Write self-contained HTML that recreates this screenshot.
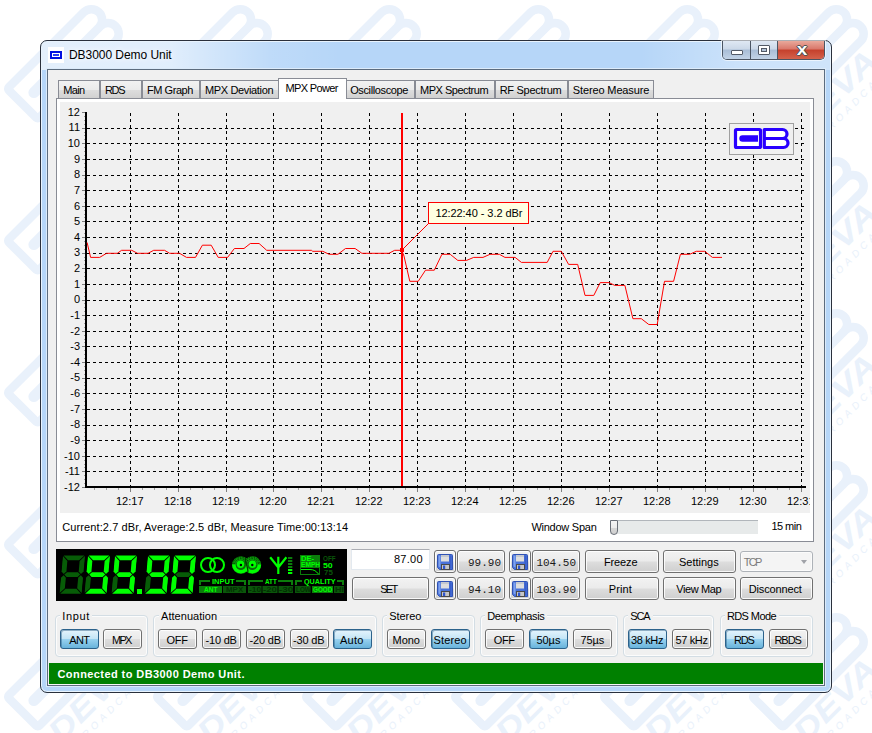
<!DOCTYPE html>
<html lang="en"><head><meta charset="utf-8"><title>DB3000 Demo Unit</title>
<style>
*{box-sizing:border-box;margin:0;padding:0}
html,body{width:872px;height:733px;overflow:hidden;background:#fff}
body{position:relative;font-family:"Liberation Sans", Arial, sans-serif;font-size:11px;color:#000}
.abs{position:absolute}
.t{position:absolute;white-space:nowrap;line-height:13px;height:13px}
#win{position:absolute;left:40px;top:40px;width:792px;height:653px;border:1px solid #2a303c;border-radius:7px;
 background:linear-gradient(90deg,rgba(255,255,255,.62) 0,rgba(255,255,255,.58) 130px,rgba(255,255,255,.12) 230px,rgba(255,255,255,0) 300px,rgba(255,255,255,0) 600px,rgba(255,255,255,.3) 700px,rgba(255,255,255,.35) 100%) top left/100% 29px no-repeat,#b6d6f8;box-shadow:inset 0 0 0 1px #e8f3fd}
#client{position:absolute;left:47px;top:69px;width:778px;height:617px;border:1px solid #5c6c7e;background:#f0f0f0;box-shadow:0 0 0 1px #dcebfa,inset 0 -1px 0 0 #f6f6f6}
.tab{position:absolute;top:80px;height:19px;border:1px solid #898c95;border-bottom:none;
 background:linear-gradient(180deg,#f2f2f2 0,#ebebeb 48%,#dddddd 52%,#cfcfcf 100%)}
.tab.sel{top:78px;height:21px;background:#fff;z-index:3}
.btn{position:absolute;border:1px solid #707070;border-radius:3px;
 background:linear-gradient(180deg,#f2f2f2 0,#ebebeb 48%,#dddddd 52%,#cfcfcf 100%);box-shadow:inset 0 0 0 1px rgba(255,255,255,.85)}
.btn.on{border-color:#2c628b;background:linear-gradient(180deg,#e5f4fc 0,#c4e5f6 48%,#98d1ef 52%,#68b3db 100%);box-shadow:inset 1px 1px 0 0 rgba(40,90,130,.45)}
.grp{position:absolute;border:1px solid #d3dde4;border-radius:4px;box-shadow:inset 0 0 0 1px #fcfcfc}
.gl{position:absolute;background:#f0f0f0;white-space:nowrap;line-height:13px;height:13px;padding:0 2px}
.lt{font-weight:bold;white-space:nowrap}
</style></head>
<body>
<svg class="abs" style="left:0;top:0" width="872" height="733" viewBox="0 0 872 733"><g fill="#e9f1fb" stroke="none" font-family="'Liberation Sans', Arial, sans-serif"><g transform="translate(-84.0 61.5) rotate(-45)"><g fill="none" stroke="#e9f1fb" stroke-width="8.5" stroke-linejoin="round"><rect x="-60" y="-21.5" width="54" height="43" rx="2"/><path d="M5 -21.5H48a10.5 10.5 0 0 1 0 21.5H5M5 0H50a10.7 10.7 0 0 1 0 21.5H5"/><path d="M-44 0H-20" stroke-width="11" stroke-linecap="round"/></g><text x="-4" y="50" font-size="31" font-weight="bold" font-style="italic" text-anchor="middle" textLength="104" lengthAdjust="spacingAndGlyphs">DEVA</text><text x="3" y="64" font-size="10" font-style="italic" text-anchor="middle" textLength="96" lengthAdjust="spacing">BROADCAST</text></g><g transform="translate(65.0 61.5) rotate(-45)"><g fill="none" stroke="#e9f1fb" stroke-width="8.5" stroke-linejoin="round"><rect x="-60" y="-21.5" width="54" height="43" rx="2"/><path d="M5 -21.5H48a10.5 10.5 0 0 1 0 21.5H5M5 0H50a10.7 10.7 0 0 1 0 21.5H5"/><path d="M-44 0H-20" stroke-width="11" stroke-linecap="round"/></g><text x="-4" y="50" font-size="31" font-weight="bold" font-style="italic" text-anchor="middle" textLength="104" lengthAdjust="spacingAndGlyphs">DEVA</text><text x="3" y="64" font-size="10" font-style="italic" text-anchor="middle" textLength="96" lengthAdjust="spacing">BROADCAST</text></g><g transform="translate(214.0 61.5) rotate(-45)"><g fill="none" stroke="#e9f1fb" stroke-width="8.5" stroke-linejoin="round"><rect x="-60" y="-21.5" width="54" height="43" rx="2"/><path d="M5 -21.5H48a10.5 10.5 0 0 1 0 21.5H5M5 0H50a10.7 10.7 0 0 1 0 21.5H5"/><path d="M-44 0H-20" stroke-width="11" stroke-linecap="round"/></g><text x="-4" y="50" font-size="31" font-weight="bold" font-style="italic" text-anchor="middle" textLength="104" lengthAdjust="spacingAndGlyphs">DEVA</text><text x="3" y="64" font-size="10" font-style="italic" text-anchor="middle" textLength="96" lengthAdjust="spacing">BROADCAST</text></g><g transform="translate(363.0 61.5) rotate(-45)"><g fill="none" stroke="#e9f1fb" stroke-width="8.5" stroke-linejoin="round"><rect x="-60" y="-21.5" width="54" height="43" rx="2"/><path d="M5 -21.5H48a10.5 10.5 0 0 1 0 21.5H5M5 0H50a10.7 10.7 0 0 1 0 21.5H5"/><path d="M-44 0H-20" stroke-width="11" stroke-linecap="round"/></g><text x="-4" y="50" font-size="31" font-weight="bold" font-style="italic" text-anchor="middle" textLength="104" lengthAdjust="spacingAndGlyphs">DEVA</text><text x="3" y="64" font-size="10" font-style="italic" text-anchor="middle" textLength="96" lengthAdjust="spacing">BROADCAST</text></g><g transform="translate(512.0 61.5) rotate(-45)"><g fill="none" stroke="#e9f1fb" stroke-width="8.5" stroke-linejoin="round"><rect x="-60" y="-21.5" width="54" height="43" rx="2"/><path d="M5 -21.5H48a10.5 10.5 0 0 1 0 21.5H5M5 0H50a10.7 10.7 0 0 1 0 21.5H5"/><path d="M-44 0H-20" stroke-width="11" stroke-linecap="round"/></g><text x="-4" y="50" font-size="31" font-weight="bold" font-style="italic" text-anchor="middle" textLength="104" lengthAdjust="spacingAndGlyphs">DEVA</text><text x="3" y="64" font-size="10" font-style="italic" text-anchor="middle" textLength="96" lengthAdjust="spacing">BROADCAST</text></g><g transform="translate(661.0 61.5) rotate(-45)"><g fill="none" stroke="#e9f1fb" stroke-width="8.5" stroke-linejoin="round"><rect x="-60" y="-21.5" width="54" height="43" rx="2"/><path d="M5 -21.5H48a10.5 10.5 0 0 1 0 21.5H5M5 0H50a10.7 10.7 0 0 1 0 21.5H5"/><path d="M-44 0H-20" stroke-width="11" stroke-linecap="round"/></g><text x="-4" y="50" font-size="31" font-weight="bold" font-style="italic" text-anchor="middle" textLength="104" lengthAdjust="spacingAndGlyphs">DEVA</text><text x="3" y="64" font-size="10" font-style="italic" text-anchor="middle" textLength="96" lengthAdjust="spacing">BROADCAST</text></g><g transform="translate(810.0 61.5) rotate(-45)"><g fill="none" stroke="#e9f1fb" stroke-width="8.5" stroke-linejoin="round"><rect x="-60" y="-21.5" width="54" height="43" rx="2"/><path d="M5 -21.5H48a10.5 10.5 0 0 1 0 21.5H5M5 0H50a10.7 10.7 0 0 1 0 21.5H5"/><path d="M-44 0H-20" stroke-width="11" stroke-linecap="round"/></g><text x="-4" y="50" font-size="31" font-weight="bold" font-style="italic" text-anchor="middle" textLength="104" lengthAdjust="spacingAndGlyphs">DEVA</text><text x="3" y="64" font-size="10" font-style="italic" text-anchor="middle" textLength="96" lengthAdjust="spacing">BROADCAST</text></g><g transform="translate(-84.0 213.5) rotate(-45)"><g fill="none" stroke="#e9f1fb" stroke-width="8.5" stroke-linejoin="round"><rect x="-60" y="-21.5" width="54" height="43" rx="2"/><path d="M5 -21.5H48a10.5 10.5 0 0 1 0 21.5H5M5 0H50a10.7 10.7 0 0 1 0 21.5H5"/><path d="M-44 0H-20" stroke-width="11" stroke-linecap="round"/></g><text x="-4" y="50" font-size="31" font-weight="bold" font-style="italic" text-anchor="middle" textLength="104" lengthAdjust="spacingAndGlyphs">DEVA</text><text x="3" y="64" font-size="10" font-style="italic" text-anchor="middle" textLength="96" lengthAdjust="spacing">BROADCAST</text></g><g transform="translate(65.0 213.5) rotate(-45)"><g fill="none" stroke="#e9f1fb" stroke-width="8.5" stroke-linejoin="round"><rect x="-60" y="-21.5" width="54" height="43" rx="2"/><path d="M5 -21.5H48a10.5 10.5 0 0 1 0 21.5H5M5 0H50a10.7 10.7 0 0 1 0 21.5H5"/><path d="M-44 0H-20" stroke-width="11" stroke-linecap="round"/></g><text x="-4" y="50" font-size="31" font-weight="bold" font-style="italic" text-anchor="middle" textLength="104" lengthAdjust="spacingAndGlyphs">DEVA</text><text x="3" y="64" font-size="10" font-style="italic" text-anchor="middle" textLength="96" lengthAdjust="spacing">BROADCAST</text></g><g transform="translate(810.0 213.5) rotate(-45)"><g fill="none" stroke="#e9f1fb" stroke-width="8.5" stroke-linejoin="round"><rect x="-60" y="-21.5" width="54" height="43" rx="2"/><path d="M5 -21.5H48a10.5 10.5 0 0 1 0 21.5H5M5 0H50a10.7 10.7 0 0 1 0 21.5H5"/><path d="M-44 0H-20" stroke-width="11" stroke-linecap="round"/></g><text x="-4" y="50" font-size="31" font-weight="bold" font-style="italic" text-anchor="middle" textLength="104" lengthAdjust="spacingAndGlyphs">DEVA</text><text x="3" y="64" font-size="10" font-style="italic" text-anchor="middle" textLength="96" lengthAdjust="spacing">BROADCAST</text></g><g transform="translate(-84.0 365.5) rotate(-45)"><g fill="none" stroke="#e9f1fb" stroke-width="8.5" stroke-linejoin="round"><rect x="-60" y="-21.5" width="54" height="43" rx="2"/><path d="M5 -21.5H48a10.5 10.5 0 0 1 0 21.5H5M5 0H50a10.7 10.7 0 0 1 0 21.5H5"/><path d="M-44 0H-20" stroke-width="11" stroke-linecap="round"/></g><text x="-4" y="50" font-size="31" font-weight="bold" font-style="italic" text-anchor="middle" textLength="104" lengthAdjust="spacingAndGlyphs">DEVA</text><text x="3" y="64" font-size="10" font-style="italic" text-anchor="middle" textLength="96" lengthAdjust="spacing">BROADCAST</text></g><g transform="translate(65.0 365.5) rotate(-45)"><g fill="none" stroke="#e9f1fb" stroke-width="8.5" stroke-linejoin="round"><rect x="-60" y="-21.5" width="54" height="43" rx="2"/><path d="M5 -21.5H48a10.5 10.5 0 0 1 0 21.5H5M5 0H50a10.7 10.7 0 0 1 0 21.5H5"/><path d="M-44 0H-20" stroke-width="11" stroke-linecap="round"/></g><text x="-4" y="50" font-size="31" font-weight="bold" font-style="italic" text-anchor="middle" textLength="104" lengthAdjust="spacingAndGlyphs">DEVA</text><text x="3" y="64" font-size="10" font-style="italic" text-anchor="middle" textLength="96" lengthAdjust="spacing">BROADCAST</text></g><g transform="translate(810.0 365.5) rotate(-45)"><g fill="none" stroke="#e9f1fb" stroke-width="8.5" stroke-linejoin="round"><rect x="-60" y="-21.5" width="54" height="43" rx="2"/><path d="M5 -21.5H48a10.5 10.5 0 0 1 0 21.5H5M5 0H50a10.7 10.7 0 0 1 0 21.5H5"/><path d="M-44 0H-20" stroke-width="11" stroke-linecap="round"/></g><text x="-4" y="50" font-size="31" font-weight="bold" font-style="italic" text-anchor="middle" textLength="104" lengthAdjust="spacingAndGlyphs">DEVA</text><text x="3" y="64" font-size="10" font-style="italic" text-anchor="middle" textLength="96" lengthAdjust="spacing">BROADCAST</text></g><g transform="translate(-84.0 517.5) rotate(-45)"><g fill="none" stroke="#e9f1fb" stroke-width="8.5" stroke-linejoin="round"><rect x="-60" y="-21.5" width="54" height="43" rx="2"/><path d="M5 -21.5H48a10.5 10.5 0 0 1 0 21.5H5M5 0H50a10.7 10.7 0 0 1 0 21.5H5"/><path d="M-44 0H-20" stroke-width="11" stroke-linecap="round"/></g><text x="-4" y="50" font-size="31" font-weight="bold" font-style="italic" text-anchor="middle" textLength="104" lengthAdjust="spacingAndGlyphs">DEVA</text><text x="3" y="64" font-size="10" font-style="italic" text-anchor="middle" textLength="96" lengthAdjust="spacing">BROADCAST</text></g><g transform="translate(65.0 517.5) rotate(-45)"><g fill="none" stroke="#e9f1fb" stroke-width="8.5" stroke-linejoin="round"><rect x="-60" y="-21.5" width="54" height="43" rx="2"/><path d="M5 -21.5H48a10.5 10.5 0 0 1 0 21.5H5M5 0H50a10.7 10.7 0 0 1 0 21.5H5"/><path d="M-44 0H-20" stroke-width="11" stroke-linecap="round"/></g><text x="-4" y="50" font-size="31" font-weight="bold" font-style="italic" text-anchor="middle" textLength="104" lengthAdjust="spacingAndGlyphs">DEVA</text><text x="3" y="64" font-size="10" font-style="italic" text-anchor="middle" textLength="96" lengthAdjust="spacing">BROADCAST</text></g><g transform="translate(810.0 517.5) rotate(-45)"><g fill="none" stroke="#e9f1fb" stroke-width="8.5" stroke-linejoin="round"><rect x="-60" y="-21.5" width="54" height="43" rx="2"/><path d="M5 -21.5H48a10.5 10.5 0 0 1 0 21.5H5M5 0H50a10.7 10.7 0 0 1 0 21.5H5"/><path d="M-44 0H-20" stroke-width="11" stroke-linecap="round"/></g><text x="-4" y="50" font-size="31" font-weight="bold" font-style="italic" text-anchor="middle" textLength="104" lengthAdjust="spacingAndGlyphs">DEVA</text><text x="3" y="64" font-size="10" font-style="italic" text-anchor="middle" textLength="96" lengthAdjust="spacing">BROADCAST</text></g><g transform="translate(-84.0 669.5) rotate(-45)"><g fill="none" stroke="#e9f1fb" stroke-width="8.5" stroke-linejoin="round"><rect x="-60" y="-21.5" width="54" height="43" rx="2"/><path d="M5 -21.5H48a10.5 10.5 0 0 1 0 21.5H5M5 0H50a10.7 10.7 0 0 1 0 21.5H5"/><path d="M-44 0H-20" stroke-width="11" stroke-linecap="round"/></g><text x="-4" y="50" font-size="31" font-weight="bold" font-style="italic" text-anchor="middle" textLength="104" lengthAdjust="spacingAndGlyphs">DEVA</text><text x="3" y="64" font-size="10" font-style="italic" text-anchor="middle" textLength="96" lengthAdjust="spacing">BROADCAST</text></g><g transform="translate(65.0 669.5) rotate(-45)"><g fill="none" stroke="#e9f1fb" stroke-width="8.5" stroke-linejoin="round"><rect x="-60" y="-21.5" width="54" height="43" rx="2"/><path d="M5 -21.5H48a10.5 10.5 0 0 1 0 21.5H5M5 0H50a10.7 10.7 0 0 1 0 21.5H5"/><path d="M-44 0H-20" stroke-width="11" stroke-linecap="round"/></g><text x="-4" y="50" font-size="31" font-weight="bold" font-style="italic" text-anchor="middle" textLength="104" lengthAdjust="spacingAndGlyphs">DEVA</text><text x="3" y="64" font-size="10" font-style="italic" text-anchor="middle" textLength="96" lengthAdjust="spacing">BROADCAST</text></g><g transform="translate(214.0 669.5) rotate(-45)"><g fill="none" stroke="#e9f1fb" stroke-width="8.5" stroke-linejoin="round"><rect x="-60" y="-21.5" width="54" height="43" rx="2"/><path d="M5 -21.5H48a10.5 10.5 0 0 1 0 21.5H5M5 0H50a10.7 10.7 0 0 1 0 21.5H5"/><path d="M-44 0H-20" stroke-width="11" stroke-linecap="round"/></g><text x="-4" y="50" font-size="31" font-weight="bold" font-style="italic" text-anchor="middle" textLength="104" lengthAdjust="spacingAndGlyphs">DEVA</text><text x="3" y="64" font-size="10" font-style="italic" text-anchor="middle" textLength="96" lengthAdjust="spacing">BROADCAST</text></g><g transform="translate(363.0 669.5) rotate(-45)"><g fill="none" stroke="#e9f1fb" stroke-width="8.5" stroke-linejoin="round"><rect x="-60" y="-21.5" width="54" height="43" rx="2"/><path d="M5 -21.5H48a10.5 10.5 0 0 1 0 21.5H5M5 0H50a10.7 10.7 0 0 1 0 21.5H5"/><path d="M-44 0H-20" stroke-width="11" stroke-linecap="round"/></g><text x="-4" y="50" font-size="31" font-weight="bold" font-style="italic" text-anchor="middle" textLength="104" lengthAdjust="spacingAndGlyphs">DEVA</text><text x="3" y="64" font-size="10" font-style="italic" text-anchor="middle" textLength="96" lengthAdjust="spacing">BROADCAST</text></g><g transform="translate(512.0 669.5) rotate(-45)"><g fill="none" stroke="#e9f1fb" stroke-width="8.5" stroke-linejoin="round"><rect x="-60" y="-21.5" width="54" height="43" rx="2"/><path d="M5 -21.5H48a10.5 10.5 0 0 1 0 21.5H5M5 0H50a10.7 10.7 0 0 1 0 21.5H5"/><path d="M-44 0H-20" stroke-width="11" stroke-linecap="round"/></g><text x="-4" y="50" font-size="31" font-weight="bold" font-style="italic" text-anchor="middle" textLength="104" lengthAdjust="spacingAndGlyphs">DEVA</text><text x="3" y="64" font-size="10" font-style="italic" text-anchor="middle" textLength="96" lengthAdjust="spacing">BROADCAST</text></g><g transform="translate(661.0 669.5) rotate(-45)"><g fill="none" stroke="#e9f1fb" stroke-width="8.5" stroke-linejoin="round"><rect x="-60" y="-21.5" width="54" height="43" rx="2"/><path d="M5 -21.5H48a10.5 10.5 0 0 1 0 21.5H5M5 0H50a10.7 10.7 0 0 1 0 21.5H5"/><path d="M-44 0H-20" stroke-width="11" stroke-linecap="round"/></g><text x="-4" y="50" font-size="31" font-weight="bold" font-style="italic" text-anchor="middle" textLength="104" lengthAdjust="spacingAndGlyphs">DEVA</text><text x="3" y="64" font-size="10" font-style="italic" text-anchor="middle" textLength="96" lengthAdjust="spacing">BROADCAST</text></g><g transform="translate(810.0 669.5) rotate(-45)"><g fill="none" stroke="#e9f1fb" stroke-width="8.5" stroke-linejoin="round"><rect x="-60" y="-21.5" width="54" height="43" rx="2"/><path d="M5 -21.5H48a10.5 10.5 0 0 1 0 21.5H5M5 0H50a10.7 10.7 0 0 1 0 21.5H5"/><path d="M-44 0H-20" stroke-width="11" stroke-linecap="round"/></g><text x="-4" y="50" font-size="31" font-weight="bold" font-style="italic" text-anchor="middle" textLength="104" lengthAdjust="spacingAndGlyphs">DEVA</text><text x="3" y="64" font-size="10" font-style="italic" text-anchor="middle" textLength="96" lengthAdjust="spacing">BROADCAST</text></g></g></svg>
<div id="win"></div>
<div class="abs" style="left:48px;top:47px;width:16px;height:16px;background:#fff"></div><div class="abs" style="left:50px;top:51px;width:12px;height:8px;border:2px solid #0010e0;background:#fff"></div><div class="abs" style="left:53px;top:54px;width:6px;height:2px;background:#2a3cf0"></div>
<div class="t" id="title" style="left:69px;top:47px;font-size:12px;line-height:16px;height:16px;letter-spacing:-0.05px;text-shadow:0 0 6px #fff,0 0 10px #fff">DB3000 Demo Unit</div>
<div class="abs" style="left:722px;top:41px;width:103px;height:19px;border:1px solid #4b5563;border-top:none;border-radius:0 0 5px 5px;overflow:hidden;box-shadow:0 0 0 1px rgba(255,255,255,.6)">
<div class="abs" style="left:0;top:0;width:28px;height:18px;background:linear-gradient(180deg,#dfe8f3 0,#cbd8e8 45%,#a9bdd6 50%,#c2d3e6 100%);border-right:1px solid #4b5563"></div>
<div class="abs" style="left:28px;top:0;width:27px;height:18px;background:linear-gradient(180deg,#dfe8f3 0,#cbd8e8 45%,#a9bdd6 50%,#c2d3e6 100%);border-right:1px solid #4b5563"></div>
<div class="abs" style="left:55px;top:0;width:47px;height:18px;background:linear-gradient(180deg,#e9a99b 0,#d9776a 45%,#c5402c 50%,#d4624b 100%)"></div>
<div class="abs" style="left:8px;top:9px;width:12px;height:5px;background:#fff;border:1px solid #535a66;border-radius:1px"></div>
<div class="abs" style="left:35px;top:4px;width:12px;height:10px;background:#fff;border:1px solid #535a66;border-radius:1px"></div>
<div class="abs" style="left:38px;top:7px;width:6px;height:4px;background:#b4c4d8;border:1px solid #535a66"></div>
<div class="t" style="left:69.5px;top:0.6px;width:18px;text-align:center;font-size:17px;line-height:16px;height:16px;transform:scaleX(1.12);font-weight:bold;color:#fff;text-shadow:0 0 1px #3b3b3b,1px 0 0 #555,-1px 0 0 #555,0 1px 0 #555,0 -1px 0 #555">x</div>
</div>
<div id="client"></div>
<div class="tab" style="left:58px;width:42px"></div><div class="t" style="letter-spacing:-0.71px;left:63.3px;top:84px;z-index:4">Main</div>
<div class="tab" style="left:100px;width:42px"></div><div class="t" style="letter-spacing:-1.27px;left:104.9px;top:84px;z-index:4">RDS</div>
<div class="tab" style="left:142px;width:58px"></div><div class="t" style="letter-spacing:-0.45px;left:147.0px;top:84px;z-index:4">FM Graph</div>
<div class="tab" style="left:200px;width:79px"></div><div class="t" style="letter-spacing:-0.35px;left:205.0px;top:84px;z-index:4">MPX Deviation</div>
<div class="tab" style="left:346px;width:69px"></div><div class="t" style="letter-spacing:-0.38px;left:350.2px;top:84px;z-index:4">Oscilloscope</div>
<div class="tab" style="left:415px;width:80px"></div><div class="t" style="letter-spacing:-0.50px;left:420.09999999999997px;top:84px;z-index:4">MPX Spectrum</div>
<div class="tab" style="left:495px;width:73px"></div><div class="t" style="letter-spacing:-0.28px;left:499.7px;top:84px;z-index:4">RF Spectrum</div>
<div class="tab" style="left:568px;width:86px"></div><div class="t" style="letter-spacing:-0.13px;left:572.8px;top:84px;z-index:4">Stereo Measure</div>
<div class="abs" style="left:56px;top:98px;width:758px;height:444px;border:1px solid #898c95;background:#fff;z-index:2"></div>
<div class="tab sel" style="left:278px;width:69px"></div><div class="abs" style="left:279px;top:98px;width:67px;height:1px;background:#fff;z-index:4"></div><div class="t" style="letter-spacing:-0.63px;left:285.4px;top:82px;z-index:4">MPX Power</div>
<svg class="abs" style="left:60px;top:102px;z-index:3" width="750" height="411" viewBox="60 102 750 411" shape-rendering="crispEdges"><rect x="60" y="102" width="750" height="411" fill="#f0f0f0"/><path d="M87 471.5H804M87 456.5H804M87 440.5H804M87 425.5H804M87 409.5H804M87 393.5H804M87 378.5H804M87 362.5H804M87 346.5H804M87 331.5H804M87 315.5H804M87 300.5H804M87 284.5H804M87 268.5H804M87 253.5H804M87 237.5H804M87 221.5H804M87 206.5H804M87 190.5H804M87 175.5H804M87 159.5H804M87 143.5H804M87 128.5H804" stroke="#000" stroke-width="1" stroke-dasharray="3 3" fill="none"/><path d="M130.5 113V486M178.5 113V486M226.5 113V486M273.5 113V486M321.5 113V486M369.5 113V486M417.5 113V486M465.5 113V486M513.5 113V486M561.5 113V486M609.5 113V486M657.5 113V486M705.5 113V486M753.5 113V486M801.5 113V486" stroke="#000" stroke-width="1" stroke-dasharray="3 3" fill="none"/><path d="M82 487.5H85M82 471.5H85M82 456.5H85M82 440.5H85M82 425.5H85M82 409.5H85M82 393.5H85M82 378.5H85M82 362.5H85M82 346.5H85M82 331.5H85M82 315.5H85M82 300.5H85M82 284.5H85M82 268.5H85M82 253.5H85M82 237.5H85M82 221.5H85M82 206.5H85M82 190.5H85M82 175.5H85M82 159.5H85M82 143.5H85M82 128.5H85M82 112.5H85" stroke="#808080" stroke-width="1" fill="none"/><path d="M84 116.5H85M84 120.5H85M84 124.5H85M84 132.5H85M84 135.5H85M84 139.5H85M84 147.5H85M84 151.5H85M84 155.5H85M84 163.5H85M84 167.5H85M84 171.5H85M84 178.5H85M84 182.5H85M84 186.5H85M84 194.5H85M84 198.5H85M84 202.5H85M84 210.5H85M84 214.5H85M84 217.5H85M84 225.5H85M84 229.5H85M84 233.5H85M84 241.5H85M84 245.5H85M84 249.5H85M84 257.5H85M84 260.5H85M84 264.5H85M84 272.5H85M84 276.5H85M84 280.5H85M84 288.5H85M84 292.5H85M84 296.5H85M84 303.5H85M84 307.5H85M84 311.5H85M84 319.5H85M84 323.5H85M84 327.5H85M84 335.5H85M84 339.5H85M84 342.5H85M84 350.5H85M84 354.5H85M84 358.5H85M84 366.5H85M84 370.5H85M84 374.5H85M84 382.5H85M84 385.5H85M84 389.5H85M84 397.5H85M84 401.5H85M84 405.5H85M84 413.5H85M84 417.5H85M84 421.5H85M84 428.5H85M84 432.5H85M84 436.5H85M84 444.5H85M84 448.5H85M84 452.5H85M84 460.5H85M84 464.5H85M84 467.5H85M84 475.5H85M84 479.5H85M84 483.5H85" stroke="#a0a0a0" stroke-width="1" fill="none"/><path d="M130.5 488V492M178.5 488V492M226.5 488V492M273.5 488V492M321.5 488V492M369.5 488V492M417.5 488V492M465.5 488V492M513.5 488V492M561.5 488V492M609.5 488V492M657.5 488V492M705.5 488V492M753.5 488V492M801.5 488V492" stroke="#808080" stroke-width="1" fill="none"/><path d="M94.5 488V490M106.5 488V490M118.5 488V490M142.5 488V490M154.5 488V490M166.5 488V490M190.5 488V490M202.5 488V490M214.5 488V490M238.5 488V490M250.5 488V490M262.5 488V490M286.5 488V490M298.5 488V490M310.5 488V490M333.5 488V490M345.5 488V490M357.5 488V490M381.5 488V490M393.5 488V490M405.5 488V490M429.5 488V490M441.5 488V490M453.5 488V490M477.5 488V490M489.5 488V490M501.5 488V490M525.5 488V490M537.5 488V490M549.5 488V490M573.5 488V490M585.5 488V490M597.5 488V490M621.5 488V490M633.5 488V490M645.5 488V490M669.5 488V490M681.5 488V490M693.5 488V490M717.5 488V490M729.5 488V490M741.5 488V490M765.5 488V490M777.5 488V490M789.5 488V490" stroke="#a0a0a0" stroke-width="1" fill="none"/><rect x="85" y="112" width="2" height="376" fill="#000"/><rect x="85" y="486" width="721" height="2" fill="#000"/><path d="M87.1 242.5 L90.6 257.4 L99.7 257.4 L106.5 253.3 L117.3 253.3 L121.6 250.3 L131.7 250.3 L137.5 253.3 L148.1 253.3 L153.7 250.3 L164.5 250.3 L169.6 253.3 L179.6 253.3 L186.5 257.4 L195.5 257.4 L202.4 245.2 L211.2 245.2 L218.2 257.4 L227.6 257.4 L234.4 248.5 L244.0 248.5 L250.3 243.5 L259.1 243.5 L266.7 250.3 L311.4 250.3 L312.7 251.3 L322.8 251.3 L329.1 254.3 L337.9 254.3 L345.5 248.5 L355.1 248.5 L361.9 253.3 L388.9 253.3 L394.7 250.3 L401.8 250.3 L404.0 256.1 L409.8 281.3 L418.2 281.3 L425.5 270.2 L434.3 270.2 L441.9 254.3 L450.2 254.3 L457.8 260.4 L466.6 260.4 L473.7 257.4 L483.0 257.4 L490.0 254.3 L499.4 254.3 L504.9 257.4 L515.1 257.4 L521.4 262.4 L547.2 262.4 L553.0 251.3 L561.3 251.3 L568.6 264.4 L577.7 264.4 L585.0 295.4 L593.8 295.4 L600.2 282.6 L609.0 282.6 L614.8 285.4 L624.9 285.4 L632.9 318.7 L641.3 318.7 L648.8 324.5 L657.2 324.5 L664.5 281.3 L673.6 281.3 L680.4 254.3 L689.7 254.3 L696.3 251.3 L704.8 251.3 L712.4 257.4 L722.0 257.4" stroke="#ff0000" stroke-width="1" fill="none" shape-rendering="auto"/><rect x="401" y="113" width="2" height="373" fill="#ff0000"/><path d="M402 250L429 223" stroke="#ff0000" stroke-width="1" fill="none" shape-rendering="auto"/><rect x="400" y="248" width="4" height="4" fill="#ff0000"/><rect x="428.5" y="202.5" width="100" height="21" fill="#ffffe1" stroke="#ff0000" stroke-width="1"/><rect x="729.5" y="123.5" width="64" height="31" fill="#f0f0f0" stroke="#a0a0a0" stroke-width="1"/><g shape-rendering="auto" fill="#fff" stroke="#2800ff" stroke-width="3.2" stroke-linejoin="round"><rect x="735.5" y="129.5" width="25" height="18" rx="1"/><path d="M764.3 129.5H782.5a4 4 0 0 1 0 9H764.3ZM764.3 138.5H783.5a4.3 4.3 0 0 1 0 9H764.3Z" /><path d="M742.5 135.3H758V141.7H742.5a3.2 3.2 0 0 1 0 -6.4Z" fill="#2800ff" stroke="none"/></g></svg>
<div class="t" style="left:50px;width:30px;text-align:right;top:480.8px;z-index:4">-12</div><div class="t" style="left:50px;width:30px;text-align:right;top:465.2px;z-index:4">-11</div><div class="t" style="left:50px;width:30px;text-align:right;top:449.6px;z-index:4">-10</div><div class="t" style="left:50px;width:30px;text-align:right;top:433.9px;z-index:4">-9</div><div class="t" style="left:50px;width:30px;text-align:right;top:418.3px;z-index:4">-8</div><div class="t" style="left:50px;width:30px;text-align:right;top:402.7px;z-index:4">-7</div><div class="t" style="left:50px;width:30px;text-align:right;top:387.1px;z-index:4">-6</div><div class="t" style="left:50px;width:30px;text-align:right;top:371.4px;z-index:4">-5</div><div class="t" style="left:50px;width:30px;text-align:right;top:355.8px;z-index:4">-4</div><div class="t" style="left:50px;width:30px;text-align:right;top:340.2px;z-index:4">-3</div><div class="t" style="left:50px;width:30px;text-align:right;top:324.6px;z-index:4">-2</div><div class="t" style="left:50px;width:30px;text-align:right;top:308.9px;z-index:4">-1</div><div class="t" style="left:50px;width:30px;text-align:right;top:293.3px;z-index:4">0</div><div class="t" style="left:50px;width:30px;text-align:right;top:277.7px;z-index:4">1</div><div class="t" style="left:50px;width:30px;text-align:right;top:262.1px;z-index:4">2</div><div class="t" style="left:50px;width:30px;text-align:right;top:246.4px;z-index:4">3</div><div class="t" style="left:50px;width:30px;text-align:right;top:230.8px;z-index:4">4</div><div class="t" style="left:50px;width:30px;text-align:right;top:215.2px;z-index:4">5</div><div class="t" style="left:50px;width:30px;text-align:right;top:199.6px;z-index:4">6</div><div class="t" style="left:50px;width:30px;text-align:right;top:183.9px;z-index:4">7</div><div class="t" style="left:50px;width:30px;text-align:right;top:168.3px;z-index:4">8</div><div class="t" style="left:50px;width:30px;text-align:right;top:152.7px;z-index:4">9</div><div class="t" style="left:50px;width:30px;text-align:right;top:137.1px;z-index:4">10</div><div class="t" style="left:50px;width:30px;text-align:right;top:121.4px;z-index:4">11</div><div class="t" style="left:50px;width:30px;text-align:right;top:105.8px;z-index:4">12</div>
<div class="abs" style="left:60px;top:495px;width:750px;height:14px;overflow:hidden;z-index:4"><div class="t ax" style="left:56px;top:0px">12:17</div><div class="t ax" style="left:104px;top:0px">12:18</div><div class="t ax" style="left:152px;top:0px">12:19</div><div class="t ax" style="left:199px;top:0px">12:20</div><div class="t ax" style="left:247px;top:0px">12:21</div><div class="t ax" style="left:295px;top:0px">12:22</div><div class="t ax" style="left:343px;top:0px">12:23</div><div class="t ax" style="left:391px;top:0px">12:24</div><div class="t ax" style="left:439px;top:0px">12:25</div><div class="t ax" style="left:487px;top:0px">12:26</div><div class="t ax" style="left:535px;top:0px">12:27</div><div class="t ax" style="left:583px;top:0px">12:28</div><div class="t ax" style="left:631px;top:0px">12:29</div><div class="t ax" style="left:679px;top:0px">12:30</div><div class="t ax" style="left:727px;top:0px">12:31</div></div>
<div class="abs" style="left:810px;top:102px;width:3px;height:439px;background:#fff;z-index:5"></div><div class="t" style="letter-spacing:-0.06px;left:435.4px;top:207px;z-index:4">12:22:40 - 3.2 dBr</div>
<div class="t" style="letter-spacing:0.10px;left:62.3px;top:521px;z-index:4">Current:2.7 dBr, Average:2.5 dBr, Measure Time:00:13:14</div>
<div class="t" style="letter-spacing:-0.25px;left:531.4px;top:521px;z-index:4">Window Span</div><div class="t" style="letter-spacing:-0.53px;left:771.4px;top:520px;z-index:4">15 min</div>
<div class="abs" style="left:610px;top:520px;width:148px;height:14px;background:#e7eaea;border-top:1px solid #b1b6bb;z-index:4"></div><div class="abs" style="left:610px;top:520px;width:8px;height:15px;border:1px solid #6a6f78;border-radius:1px 1px 4px 4px;background:linear-gradient(180deg,#f4f4f4 0,#ececec 50%,#d6d6d6 55%,#d0d0d0 100%);z-index:5"></div>
<div id="lcd" class="abs" style="left:56px;top:549px;width:291px;height:52px;background:#000;overflow:hidden">
<div class="abs" style="left:2.6px;top:6px;width:23px;height:39.2px;transform:skewX(-5.2deg);transform-origin:0 100%"><div class="abs" style="left:0;top:0;width:100%;height:100%;background:#075c07;clip-path:polygon(1.09px 0.45px,21.91px 0.45px,17.01px 5.35px,5.99px 5.35px)"></div><div class="abs" style="left:0;top:0;width:100%;height:100%;background:#075c07;clip-path:polygon(5.99px 33.85px,17.01px 33.85px,21.91px 38.75px,1.09px 38.75px)"></div><div class="abs" style="left:0;top:0;width:100%;height:100%;background:#075c07;clip-path:polygon(0.45px 1.09px,5.35px 5.99px,5.35px 16.51px,2.90px 18.96px,0.45px 16.51px)"></div><div class="abs" style="left:0;top:0;width:100%;height:100%;background:#075c07;clip-path:polygon(0.45px 22.69px,2.90px 20.24px,5.35px 22.69px,5.35px 33.21px,0.45px 38.11px)"></div><div class="abs" style="left:0;top:0;width:100%;height:100%;background:#075c07;clip-path:polygon(22.55px 1.09px,22.55px 16.51px,20.10px 18.96px,17.65px 16.51px,17.65px 5.99px)"></div><div class="abs" style="left:0;top:0;width:100%;height:100%;background:#075c07;clip-path:polygon(20.10px 20.24px,22.55px 22.69px,22.55px 38.11px,17.65px 33.21px,17.65px 22.69px)"></div><div class="abs" style="left:0;top:0;width:100%;height:100%;background:#075c07;clip-path:polygon(3.54px 19.60px,5.99px 17.15px,17.01px 17.15px,19.46px 19.60px,17.01px 22.05px,5.99px 22.05px)"></div></div><div class="abs" style="left:28.4px;top:6px;width:23px;height:39.2px;transform:skewX(-5.2deg);transform-origin:0 100%"><div class="abs" style="left:0;top:0;width:100%;height:100%;background:#00ff00;clip-path:polygon(1.09px 0.45px,21.91px 0.45px,17.01px 5.35px,5.99px 5.35px)"></div><div class="abs" style="left:0;top:0;width:100%;height:100%;background:#00ff00;clip-path:polygon(5.99px 33.85px,17.01px 33.85px,21.91px 38.75px,1.09px 38.75px)"></div><div class="abs" style="left:0;top:0;width:100%;height:100%;background:#00ff00;clip-path:polygon(0.45px 1.09px,5.35px 5.99px,5.35px 16.51px,2.90px 18.96px,0.45px 16.51px)"></div><div class="abs" style="left:0;top:0;width:100%;height:100%;background:#075c07;clip-path:polygon(0.45px 22.69px,2.90px 20.24px,5.35px 22.69px,5.35px 33.21px,0.45px 38.11px)"></div><div class="abs" style="left:0;top:0;width:100%;height:100%;background:#00ff00;clip-path:polygon(22.55px 1.09px,22.55px 16.51px,20.10px 18.96px,17.65px 16.51px,17.65px 5.99px)"></div><div class="abs" style="left:0;top:0;width:100%;height:100%;background:#00ff00;clip-path:polygon(20.10px 20.24px,22.55px 22.69px,22.55px 38.11px,17.65px 33.21px,17.65px 22.69px)"></div><div class="abs" style="left:0;top:0;width:100%;height:100%;background:#00ff00;clip-path:polygon(3.54px 19.60px,5.99px 17.15px,17.01px 17.15px,19.46px 19.60px,17.01px 22.05px,5.99px 22.05px)"></div></div><div class="abs" style="left:54.6px;top:6px;width:23px;height:39.2px;transform:skewX(-5.2deg);transform-origin:0 100%"><div class="abs" style="left:0;top:0;width:100%;height:100%;background:#00ff00;clip-path:polygon(1.09px 0.45px,21.91px 0.45px,17.01px 5.35px,5.99px 5.35px)"></div><div class="abs" style="left:0;top:0;width:100%;height:100%;background:#00ff00;clip-path:polygon(5.99px 33.85px,17.01px 33.85px,21.91px 38.75px,1.09px 38.75px)"></div><div class="abs" style="left:0;top:0;width:100%;height:100%;background:#00ff00;clip-path:polygon(0.45px 1.09px,5.35px 5.99px,5.35px 16.51px,2.90px 18.96px,0.45px 16.51px)"></div><div class="abs" style="left:0;top:0;width:100%;height:100%;background:#075c07;clip-path:polygon(0.45px 22.69px,2.90px 20.24px,5.35px 22.69px,5.35px 33.21px,0.45px 38.11px)"></div><div class="abs" style="left:0;top:0;width:100%;height:100%;background:#00ff00;clip-path:polygon(22.55px 1.09px,22.55px 16.51px,20.10px 18.96px,17.65px 16.51px,17.65px 5.99px)"></div><div class="abs" style="left:0;top:0;width:100%;height:100%;background:#00ff00;clip-path:polygon(20.10px 20.24px,22.55px 22.69px,22.55px 38.11px,17.65px 33.21px,17.65px 22.69px)"></div><div class="abs" style="left:0;top:0;width:100%;height:100%;background:#00ff00;clip-path:polygon(3.54px 19.60px,5.99px 17.15px,17.01px 17.15px,19.46px 19.60px,17.01px 22.05px,5.99px 22.05px)"></div></div><div class="abs" style="left:88.2px;top:6px;width:23px;height:39.2px;transform:skewX(-5.2deg);transform-origin:0 100%"><div class="abs" style="left:0;top:0;width:100%;height:100%;background:#00ff00;clip-path:polygon(1.09px 0.45px,21.91px 0.45px,17.01px 5.35px,5.99px 5.35px)"></div><div class="abs" style="left:0;top:0;width:100%;height:100%;background:#00ff00;clip-path:polygon(5.99px 33.85px,17.01px 33.85px,21.91px 38.75px,1.09px 38.75px)"></div><div class="abs" style="left:0;top:0;width:100%;height:100%;background:#00ff00;clip-path:polygon(0.45px 1.09px,5.35px 5.99px,5.35px 16.51px,2.90px 18.96px,0.45px 16.51px)"></div><div class="abs" style="left:0;top:0;width:100%;height:100%;background:#075c07;clip-path:polygon(0.45px 22.69px,2.90px 20.24px,5.35px 22.69px,5.35px 33.21px,0.45px 38.11px)"></div><div class="abs" style="left:0;top:0;width:100%;height:100%;background:#00ff00;clip-path:polygon(22.55px 1.09px,22.55px 16.51px,20.10px 18.96px,17.65px 16.51px,17.65px 5.99px)"></div><div class="abs" style="left:0;top:0;width:100%;height:100%;background:#00ff00;clip-path:polygon(20.10px 20.24px,22.55px 22.69px,22.55px 38.11px,17.65px 33.21px,17.65px 22.69px)"></div><div class="abs" style="left:0;top:0;width:100%;height:100%;background:#00ff00;clip-path:polygon(3.54px 19.60px,5.99px 17.15px,17.01px 17.15px,19.46px 19.60px,17.01px 22.05px,5.99px 22.05px)"></div></div><div class="abs" style="left:114.0px;top:6px;width:23px;height:39.2px;transform:skewX(-5.2deg);transform-origin:0 100%"><div class="abs" style="left:0;top:0;width:100%;height:100%;background:#00ff00;clip-path:polygon(1.09px 0.45px,21.91px 0.45px,17.01px 5.35px,5.99px 5.35px)"></div><div class="abs" style="left:0;top:0;width:100%;height:100%;background:#00ff00;clip-path:polygon(5.99px 33.85px,17.01px 33.85px,21.91px 38.75px,1.09px 38.75px)"></div><div class="abs" style="left:0;top:0;width:100%;height:100%;background:#00ff00;clip-path:polygon(0.45px 1.09px,5.35px 5.99px,5.35px 16.51px,2.90px 18.96px,0.45px 16.51px)"></div><div class="abs" style="left:0;top:0;width:100%;height:100%;background:#00ff00;clip-path:polygon(0.45px 22.69px,2.90px 20.24px,5.35px 22.69px,5.35px 33.21px,0.45px 38.11px)"></div><div class="abs" style="left:0;top:0;width:100%;height:100%;background:#00ff00;clip-path:polygon(22.55px 1.09px,22.55px 16.51px,20.10px 18.96px,17.65px 16.51px,17.65px 5.99px)"></div><div class="abs" style="left:0;top:0;width:100%;height:100%;background:#00ff00;clip-path:polygon(20.10px 20.24px,22.55px 22.69px,22.55px 38.11px,17.65px 33.21px,17.65px 22.69px)"></div><div class="abs" style="left:0;top:0;width:100%;height:100%;background:#075c07;clip-path:polygon(3.54px 19.60px,5.99px 17.15px,17.01px 17.15px,19.46px 19.60px,17.01px 22.05px,5.99px 22.05px)"></div></div><div class="abs" style="left:81px;top:39.6px;width:5.4px;height:5px;background:#00ff00"></div>
<svg class="abs" style="left:0;top:0" width="291" height="52" viewBox="56 549 291 52"><g fill="none" stroke="#00ff00" stroke-width="2"><circle cx="208" cy="565" r="7"/><circle cx="217" cy="565" r="7"/></g><circle cx="240.9" cy="565" r="8.8" fill="#0a9a0a"/><circle cx="252.3" cy="565" r="8.8" fill="#0a9a0a"/><g fill="none" stroke="#022a02" stroke-width="0.9" stroke-dasharray="1.3 1.3"><circle cx="240.9" cy="565" r="6.4"/><circle cx="240.9" cy="565" r="8"/></g><g fill="none" stroke="#022a02" stroke-width="0.9" stroke-dasharray="1.3 1.3"><circle cx="252.3" cy="565" r="6.4"/><circle cx="252.3" cy="565" r="8"/></g><path d="M232.0 564.5A8.9 8.9 0 0 0 249.8 564.5L246.20000000000002 564.5A5.3 5.3 0 0 1 235.6 564.5Z" fill="#00ff00"/><path d="M243.4 564.5A8.9 8.9 0 0 0 261.2 564.5L257.6 564.5A5.3 5.3 0 0 1 247.0 564.5Z" fill="#00ff00"/><circle cx="240.9" cy="565" r="5.1" fill="#0a6a0a"/><circle cx="252.3" cy="565" r="5.1" fill="#0a6a0a"/><circle cx="240.5" cy="564.2" r="3.7" fill="#00ff00"/><circle cx="252.5" cy="564.2" r="3.7" fill="#00ff00"/><path d="M245.4 558.5C244.6 562 248.6 568 247.8 572" fill="none" stroke="#043a04" stroke-width="1.3"/><circle cx="240.9" cy="565" r="1.2" fill="#000"/><circle cx="252.3" cy="565" r="1.2" fill="#000"/><g fill="none" stroke="#00ff00" stroke-width="2.2"><path d="M278.3 556.8V574M270.2 557.2L278.3 567.5L286.4 557.2" /></g><rect x="288" y="557" width="4.3" height="2" fill="#0b7d0b"/><rect x="288" y="560" width="4.3" height="2" fill="#0b7d0b"/><rect x="288" y="563" width="4.3" height="2" fill="#0b7d0b"/><rect x="288" y="566" width="4.3" height="2" fill="#0b7d0b"/><rect x="288" y="569" width="4.3" height="2" fill="#00ff00"/><rect x="288" y="572" width="4.3" height="2" fill="#00ff00"/><rect x="300" y="555" width="20" height="13" fill="#0b7d0b"/><rect x="300.5" y="555.5" width="19" height="19" fill="none" stroke="#0b7d0b" stroke-width="1"/><path d="M301 569.5H310C314 569.5 316 571 318.5 574" fill="none" stroke="#00ff00" stroke-width="1"/><path d="M200 585V581H210M236 581H245V585" fill="none" stroke="#0b7d0b" stroke-width="2"/><path d="M249 585V581H263M278 581H292V585" fill="none" stroke="#0b7d0b" stroke-width="2"/><path d="M296 585V581H302M337 581H343V585" fill="none" stroke="#0b7d0b" stroke-width="2"/><rect x="199" y="586" width="23" height="7" fill="#0b7d0b"/><rect x="223" y="586" width="23" height="7" fill="#0a560a"/><rect x="248" y="586" width="13.5" height="7" fill="#0a560a"/><rect x="262.5" y="586" width="15.0" height="7" fill="#0a560a"/><rect x="278.5" y="586" width="14.5" height="7" fill="#0a560a"/><rect x="295" y="586" width="15.5" height="7" fill="#0a560a"/><rect x="312" y="586" width="21" height="7" fill="#0b7d0b"/><rect x="334" y="586" width="10" height="7" fill="#0a560a"/></svg>
<div class="abs lt" style="transform:scaleX(1.033);transform-origin:0 50%;left:155.7px;top:29.3px;color:#00ff00;font-size:7.3px;line-height:8px;height:8px">INPUT</div><div class="abs lt" style="transform:scaleX(0.865);transform-origin:0 50%;left:208.6px;top:29.3px;color:#00ff00;font-size:7.3px;line-height:8px;height:8px">ATT</div><div class="abs lt" style="transform:scaleX(0.986);transform-origin:0 50%;left:247.7px;top:29.3px;color:#00ff00;font-size:7.3px;line-height:8px;height:8px">QUALITY</div><div class="abs lt" style="transform:scaleX(0.903);transform-origin:0 50%;left:147.7px;top:37.3px;color:#00ff00;font-size:7.3px;line-height:8px;height:8px">ANT</div><div class="abs lt" style="transform:scaleX(1.085);transform-origin:0 50%;left:170.4px;top:37.3px;color:#033003;font-size:7.3px;line-height:8px;height:8px">MPX</div><div class="abs lt" style="transform:scaleX(1.156);transform-origin:0 50%;left:192.8px;top:37.3px;color:#033003;font-size:7.3px;line-height:8px;height:8px">-10</div><div class="abs lt" style="transform:scaleX(1.317);transform-origin:0 50%;left:207.4px;top:37.3px;color:#033003;font-size:7.3px;line-height:8px;height:8px">-20</div><div class="abs lt" style="transform:scaleX(1.357);transform-origin:0 50%;left:222.8px;top:37.3px;color:#033003;font-size:7.3px;line-height:8px;height:8px">-30</div><div class="abs lt" style="transform:scaleX(0.870);transform-origin:0 50%;left:239.6px;top:37.3px;color:#033003;font-size:7.3px;line-height:8px;height:8px">LOW</div><div class="abs lt" style="transform:scaleX(0.866);transform-origin:0 50%;left:256.9px;top:37.3px;color:#00ff00;font-size:7.3px;line-height:8px;height:8px">GOOD</div><div class="abs lt" style="transform:scaleX(1.236);transform-origin:0 50%;left:278.5px;top:37.3px;color:#033003;font-size:7.3px;line-height:8px;height:8px">HI</div><div class="abs lt" style="transform:scaleX(1.044);transform-origin:0 50%;left:244.6px;top:5.8px;color:#00ff00;font-size:7.3px;line-height:8px;height:8px">DE-</div><div class="abs lt" style="transform:scaleX(0.903);transform-origin:0 50%;left:244.6px;top:11.8px;color:#00ff00;font-size:7.3px;line-height:8px;height:8px">EMPH</div><div class="abs lt" style="transform:scaleX(0.865);transform-origin:0 50%;left:266.6px;top:6.3px;color:#0a560a;font-size:7.3px;line-height:8px;height:8px">OFF</div><div class="abs lt" style="transform:scaleX(1.196);transform-origin:0 50%;left:266.7px;top:13.3px;color:#00ff00;font-size:7.3px;line-height:8px;height:8px">50</div><div class="abs lt" style="transform:scaleX(1.090);transform-origin:0 50%;left:267.5px;top:20.3px;color:#0a560a;font-size:7.3px;line-height:8px;height:8px">75</div>
</div>
<div class="abs" style="left:351px;top:549px;width:79px;height:21px;background:#fff;border:1px solid #e3e9ef;border-top-color:#abadb3;border-radius:1px"></div><div class="t" style="letter-spacing:0.29px;left:393.9px;top:553px">87.00</div>
<div class="btn" style="left:352px;top:577px;width:77px;height:23px"></div><div class="t" style="letter-spacing:-1.70px;left:380.2px;top:583.0px;">SET</div>
<div class="btn" style="left:434px;top:550px;width:22px;height:23px"></div>
<svg class="abs" style="left:437px;top:554px" width="16" height="16" viewBox="0 0 16 16"><path d="M0.5 1.5a1 1 0 0 1 1-1H14.5a1 1 0 0 1 1 1V15.5H2.5L0.5 13.5Z" fill="#4a72d8" stroke="#3052b4" stroke-width="1"/><path d="M1.5 1.5H3.5V13.5L1.5 12.5Z" fill="#7fa2ee"/><path d="M12.5 1.5H14.5V14.5H12.5Z" fill="#3a60cc"/><rect x="4" y="1" width="8" height="6.5" fill="#dedede"/><rect x="4" y="1" width="8" height="2" fill="#c4c8cf"/><rect x="4.5" y="10.5" width="8" height="5" fill="#c6c6c6" stroke="#4a4a4a" stroke-width="1"/><rect x="6" y="11.5" width="2.2" height="3.5" fill="#2f55d0"/></svg><div class="btn" style="left:457px;top:550px;width:48px;height:23px"></div><div class="t" style="left:457px;width:48px;top:556.5px;text-align:right;padding-right:4px;letter-spacing:0px;font-family:'Liberation Mono', monospace;color:#1a1a1a;">99.90</div>
<div class="btn" style="left:434px;top:577px;width:22px;height:23px"></div>
<svg class="abs" style="left:437px;top:581px" width="16" height="16" viewBox="0 0 16 16"><path d="M0.5 1.5a1 1 0 0 1 1-1H14.5a1 1 0 0 1 1 1V15.5H2.5L0.5 13.5Z" fill="#4a72d8" stroke="#3052b4" stroke-width="1"/><path d="M1.5 1.5H3.5V13.5L1.5 12.5Z" fill="#7fa2ee"/><path d="M12.5 1.5H14.5V14.5H12.5Z" fill="#3a60cc"/><rect x="4" y="1" width="8" height="6.5" fill="#dedede"/><rect x="4" y="1" width="8" height="2" fill="#c4c8cf"/><rect x="4.5" y="10.5" width="8" height="5" fill="#c6c6c6" stroke="#4a4a4a" stroke-width="1"/><rect x="6" y="11.5" width="2.2" height="3.5" fill="#2f55d0"/></svg><div class="btn" style="left:457px;top:577px;width:48px;height:23px"></div><div class="t" style="left:457px;width:48px;top:583.5px;text-align:right;padding-right:4px;letter-spacing:0px;font-family:'Liberation Mono', monospace;color:#1a1a1a;">94.10</div>
<div class="btn" style="left:509px;top:550px;width:22px;height:23px"></div>
<svg class="abs" style="left:512px;top:554px" width="16" height="16" viewBox="0 0 16 16"><path d="M0.5 1.5a1 1 0 0 1 1-1H14.5a1 1 0 0 1 1 1V15.5H2.5L0.5 13.5Z" fill="#4a72d8" stroke="#3052b4" stroke-width="1"/><path d="M1.5 1.5H3.5V13.5L1.5 12.5Z" fill="#7fa2ee"/><path d="M12.5 1.5H14.5V14.5H12.5Z" fill="#3a60cc"/><rect x="4" y="1" width="8" height="6.5" fill="#dedede"/><rect x="4" y="1" width="8" height="2" fill="#c4c8cf"/><rect x="4.5" y="10.5" width="8" height="5" fill="#c6c6c6" stroke="#4a4a4a" stroke-width="1"/><rect x="6" y="11.5" width="2.2" height="3.5" fill="#2f55d0"/></svg><div class="btn" style="left:532px;top:550px;width:48px;height:23px"></div><div class="t" style="left:532px;width:48px;top:556.5px;text-align:right;padding-right:4px;letter-spacing:0px;font-family:'Liberation Mono', monospace;color:#1a1a1a;">104.50</div>
<div class="btn" style="left:509px;top:577px;width:22px;height:23px"></div>
<svg class="abs" style="left:512px;top:581px" width="16" height="16" viewBox="0 0 16 16"><path d="M0.5 1.5a1 1 0 0 1 1-1H14.5a1 1 0 0 1 1 1V15.5H2.5L0.5 13.5Z" fill="#4a72d8" stroke="#3052b4" stroke-width="1"/><path d="M1.5 1.5H3.5V13.5L1.5 12.5Z" fill="#7fa2ee"/><path d="M12.5 1.5H14.5V14.5H12.5Z" fill="#3a60cc"/><rect x="4" y="1" width="8" height="6.5" fill="#dedede"/><rect x="4" y="1" width="8" height="2" fill="#c4c8cf"/><rect x="4.5" y="10.5" width="8" height="5" fill="#c6c6c6" stroke="#4a4a4a" stroke-width="1"/><rect x="6" y="11.5" width="2.2" height="3.5" fill="#2f55d0"/></svg><div class="btn" style="left:532px;top:577px;width:48px;height:23px"></div><div class="t" style="left:532px;width:48px;top:583.5px;text-align:right;padding-right:4px;letter-spacing:0px;font-family:'Liberation Mono', monospace;color:#1a1a1a;">103.90</div>
<div class="btn" style="left:585px;top:550px;width:74px;height:23px"></div><div class="t" style="letter-spacing:-0.11px;left:603.9px;top:556.0px;">Freeze</div>
<div class="btn" style="left:663px;top:550px;width:73px;height:23px"></div><div class="t" style="letter-spacing:-0.01px;left:679.0px;top:556.0px;">Settings</div>
<div class="btn" style="left:585px;top:577px;width:74px;height:23px"></div><div class="t" style="letter-spacing:0.12px;left:608.8px;top:583.0px;">Print</div>
<div class="btn" style="left:663px;top:577px;width:73px;height:23px"></div><div class="t" style="letter-spacing:-0.39px;left:676.2px;top:583.0px;">View Map</div>
<div class="btn" style="left:740px;top:577px;width:73px;height:23px"></div><div class="t" style="letter-spacing:-0.14px;left:748.7px;top:583.0px;">Disconnect</div>
<div class="abs" style="left:740px;top:551px;width:73px;height:21px;background:#f4f4f4;border:1px solid #adb2b8;border-radius:3px;box-shadow:inset 0 0 0 1px #fbfbfb"></div><div class="t" style="letter-spacing:-1.65px;left:743.7px;top:556px;color:#7a7a7a">TCP</div><div class="abs" style="left:801px;top:560px;width:0;height:0;border-left:3.5px solid transparent;border-right:3.5px solid transparent;border-top:4px solid #a0a2a8"></div>
<div class="grp" style="left:55px;top:615px;width:93px;height:42px"></div><div class="abs" style="left:59.9px;top:613px;width:32.0px;height:5px;background:#f0f0f0"></div><div class="t" style="letter-spacing:0.63px;left:62.3px;top:610px">Input</div>
<div class="btn on" style="left:60px;top:629px;width:39px;height:20px"></div><div class="t" style="letter-spacing:-0.60px;left:69.2px;top:634.0px;">ANT</div>
<div class="btn" style="left:103px;top:629px;width:39px;height:20px"></div><div class="t" style="letter-spacing:-1.77px;left:112.0px;top:634.0px;">MPX</div>
<div class="grp" style="left:153px;top:615px;width:224px;height:42px"></div><div class="abs" style="left:158.6px;top:613px;width:61.1px;height:5px;background:#f0f0f0"></div><div class="t" style="letter-spacing:0.04px;left:161.0px;top:610px">Attenuation</div>
<div class="btn" style="left:158px;top:629px;width:39px;height:20px"></div><div class="t" style="letter-spacing:-0.30px;left:166.5px;top:634.0px;">OFF</div>
<div class="btn" style="left:202px;top:629px;width:39px;height:20px"></div><div class="t" style="letter-spacing:-0.22px;left:205.6px;top:634.0px;">-10 dB</div>
<div class="btn" style="left:246px;top:629px;width:39px;height:20px"></div><div class="t" style="letter-spacing:-0.20px;left:249.6px;top:634.0px;">-20 dB</div>
<div class="btn" style="left:290px;top:629px;width:39px;height:20px"></div><div class="t" style="letter-spacing:-0.18px;left:293.0px;top:634.0px;">-30 dB</div>
<div class="btn on" style="left:333px;top:629px;width:39px;height:20px"></div><div class="t" style="letter-spacing:0.32px;left:339.9px;top:634.0px;">Auto</div>
<div class="grp" style="left:382px;top:615px;width:93px;height:42px"></div><div class="abs" style="left:386.8px;top:613px;width:37.2px;height:5px;background:#f0f0f0"></div><div class="t" style="letter-spacing:-0.04px;left:389.2px;top:610px">Stereo</div>
<div class="btn" style="left:387px;top:629px;width:39px;height:20px"></div><div class="t" style="letter-spacing:-0.04px;left:392.6px;top:634.0px;">Mono</div>
<div class="btn on" style="left:431px;top:629px;width:39px;height:20px"></div><div class="t" style="letter-spacing:0.14px;left:433.6px;top:634.0px;">Stereo</div>
<div class="grp" style="left:480px;top:615px;width:138px;height:42px"></div><div class="abs" style="left:484.8px;top:613px;width:62.5px;height:5px;background:#f0f0f0"></div><div class="t" style="letter-spacing:-0.40px;left:487.2px;top:610px">Deemphasis</div>
<div class="btn" style="left:485px;top:629px;width:39px;height:20px"></div><div class="t" style="letter-spacing:-0.45px;left:493.8px;top:634.0px;">OFF</div>
<div class="btn on" style="left:529px;top:629px;width:39px;height:20px"></div><div class="t" style="letter-spacing:-0.06px;left:536.5px;top:634.0px;">50µs</div>
<div class="btn" style="left:573px;top:629px;width:39px;height:20px"></div><div class="t" style="letter-spacing:-0.03px;left:580.4px;top:634.0px;">75µs</div>
<div class="grp" style="left:623px;top:615px;width:91px;height:42px"></div><div class="abs" style="left:627.9px;top:613px;width:25.3px;height:5px;background:#f0f0f0"></div><div class="t" style="letter-spacing:-1.16px;left:630.3px;top:610px">SCA</div>
<div class="btn on" style="left:628px;top:629px;width:39px;height:20px"></div><div class="t" style="letter-spacing:-0.39px;left:631.1px;top:634.0px;">38 kHz</div>
<div class="btn" style="left:672px;top:629px;width:39px;height:20px"></div><div class="t" style="letter-spacing:-0.39px;left:675.6px;top:634.0px;">57 kHz</div>
<div class="grp" style="left:720px;top:615px;width:93px;height:42px"></div><div class="abs" style="left:724.5px;top:613px;width:54.7px;height:5px;background:#f0f0f0"></div><div class="t" style="letter-spacing:-0.59px;left:726.9px;top:610px">RDS Mode</div>
<div class="btn on" style="left:725px;top:629px;width:39px;height:20px"></div><div class="t" style="letter-spacing:-1.12px;left:733.9px;top:634.0px;">RDS</div>
<div class="btn" style="left:769px;top:629px;width:39px;height:20px"></div><div class="t" style="letter-spacing:-1.02px;left:774.4px;top:634.0px;">RBDS</div>
<div class="abs" style="left:49px;top:663px;width:774px;height:21px;background:#008000"></div><div class="t" style="letter-spacing:0.42px;left:57.5px;top:668px;color:#fff;font-weight:bold">Connected to DB3000 Demo Unit.</div>
</body></html>
